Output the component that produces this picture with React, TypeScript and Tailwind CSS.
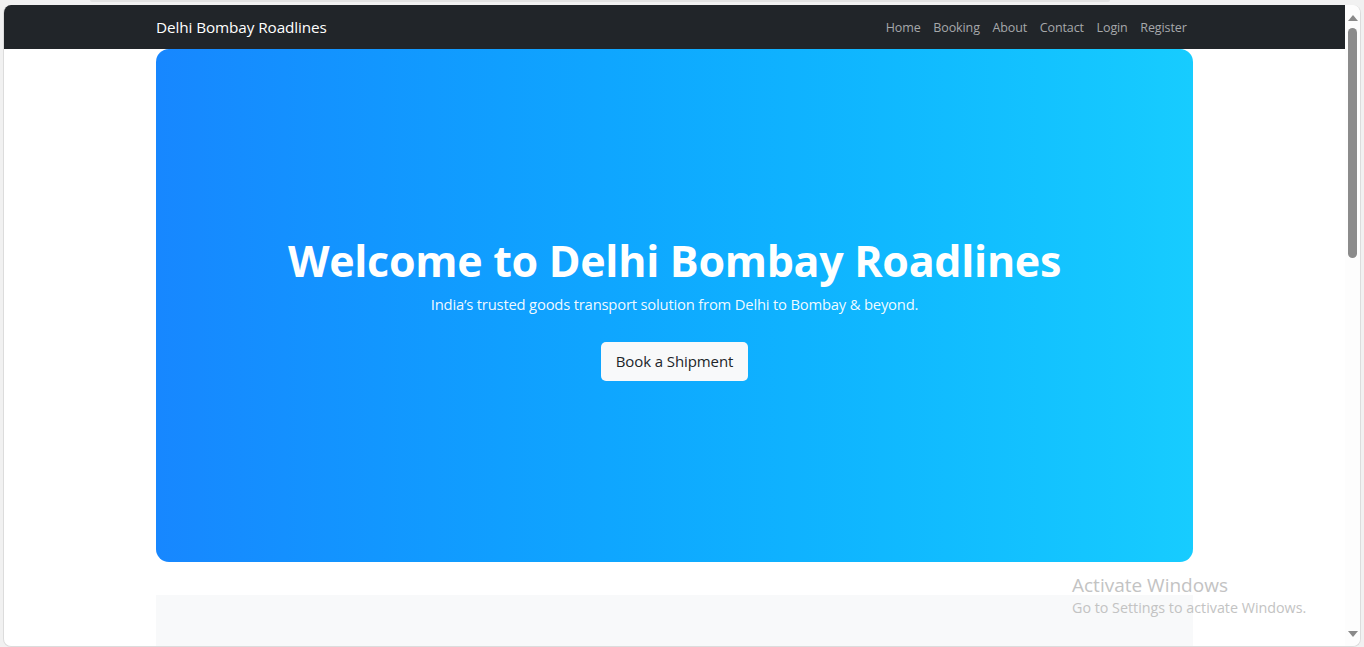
import React from "react";

const links = ["Home", "Booking", "About", "Contact", "Login", "Register"];

function Scrollbar() {
  return (
    <div className="relative w-[15px] shrink-0 bg-[#fdfdfd] rounded-tr-[8px] rounded-br-[8px]">
      <div className="absolute left-[3px] top-[10px] w-0 h-0 border-l-[5px] border-r-[5px] border-b-[6px] border-l-transparent border-r-transparent border-b-[#8a8a8a]" />
      <div className="absolute left-[3px] top-[23px] w-[9px] h-[230px] rounded-full bg-[#8b8b8b]" />
      <div className="absolute left-[3px] bottom-[9px] w-0 h-0 border-l-[5px] border-r-[5px] border-t-[6px] border-l-transparent border-r-transparent border-t-[#8a8a8a]" />
    </div>
  );
}

export default function App() {
  return (
    <div
      className="relative h-[647px] w-full overflow-hidden bg-[#f1f1f1]"
      style={{ fontFamily: '"Open Sans", "Noto Sans", sans-serif' }}
    >
      <div className="h-[5px] relative">
        <div className="absolute left-[90px] w-[1020px] top-0 h-[2px] bg-[#e2e2e2] rounded-b" />
      </div>

      <div className="mx-[3px] h-[642px] flex rounded-[8px] overflow-hidden border border-[#dcdcdc] border-t-0 bg-white">
        <div className="flex-1 flex flex-col overflow-hidden">
          <nav className="h-[44px] shrink-0 bg-[#212529]">
            <div className="w-[1037px] mx-auto h-full flex items-center justify-between">
              <span className="text-[15.3px] text-white tracking-[-0.1px]">Delhi Bombay Roadlines</span>
              <div className="flex items-center pt-[3px]">
                {links.map((l) => (
                  <a key={l} className="px-[6.3px] text-[12.5px] text-[#a6a8ab] tracking-[-0.1px]">
                    {l}
                  </a>
                ))}
              </div>
            </div>
          </nav>

          <section className="w-[1037px] mx-auto h-[513px] shrink-0 rounded-[13px] bg-gradient-to-r from-[#1787ff] to-[#17ccff] flex flex-col items-center justify-center text-white pt-[5px]">
            <h1 className="text-[43px] font-bold leading-[1.2] tracking-[-0.3px]">
              Welcome to Delhi Bombay Roadlines
            </h1>
            <p className="mt-[6px] text-[14.8px] leading-[1.5] tracking-[-0.2px] text-white/95">
              India’s trusted goods transport solution from Delhi to Bombay &amp; beyond.
            </p>
            <button className="mt-[27px] h-[39px] px-[14.5px] rounded-[5px] bg-[#f8f9fa] text-[#212529] text-[15px] tracking-[-0.1px]">
              Book a Shipment
            </button>
          </section>

          <div className="w-[1037px] mx-auto mt-[33px] flex-1 bg-[#f8f9fa]" />
        </div>
        <Scrollbar />
      </div>

      <div className="absolute left-[1072px] top-[574px] text-[#c3c3c3] leading-tight pointer-events-none">
        <div className="text-[19px]">Activate Windows</div>
        <div className="text-[14.3px] mt-[1px]">Go to Settings to activate Windows.</div>
      </div>
    </div>
  );
}
